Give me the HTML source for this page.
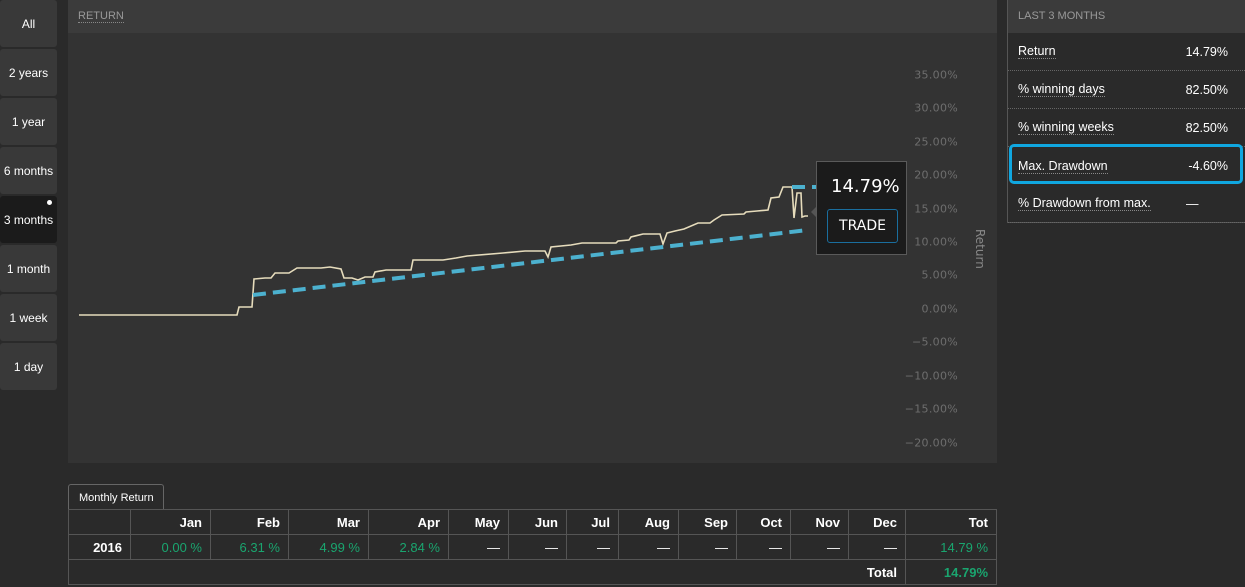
<!DOCTYPE html>
<html><head><meta charset="utf-8"><style>
*{margin:0;padding:0;box-sizing:border-box}
body{width:1245px;height:587px;background:#2a2a2a;font-family:"Liberation Sans",Arial,sans-serif;position:relative;overflow:hidden;color:#fff}
.btn{position:absolute;left:0;width:57px;height:47px;background:#393939;border-radius:3px;font-size:12px;display:flex;align-items:center;justify-content:center}
.btn.act{background:#1b1b1b}
.dot{position:absolute;right:5px;top:4px;width:5px;height:5px;border-radius:50%;background:#fff}
.panel{position:absolute;left:68px;top:0;width:929px;height:463px;background:#333}
.ph{height:33px;background:#3b3b3b;font-size:11px;color:#999;padding:10px 10px}
.ph span{border-bottom:1px dotted #888}
.yl{position:absolute;right:39px;font-size:11px;color:#6e6e6e;font-family:"DejaVu Sans",sans-serif;letter-spacing:.3px;transform:translateY(-50%)}
.rp{position:absolute;left:1007px;top:0;width:238px;height:223px;background:#2a2a2a;border-left:1px solid #555;border-bottom:1px solid #555}
.rph{height:33px;background:#3b3b3b;font-size:11px;color:#999;padding:10px 10px}
.row{height:38px;border-bottom:1px dotted #666;font-size:12.5px;display:flex;align-items:center;padding:0 17px 0 10px;justify-content:space-between}
.row .k{border-bottom:1px dotted #888}
.row .v{width:60px;text-align:right}
table{position:absolute;left:68px;top:509px;width:929px;border-collapse:collapse;font-size:13px}
td{border:1px solid #555;height:25px;text-align:right;padding:0 8px;font-weight:normal}
.h td{font-weight:bold}
.g{color:#1aa56f}
.tab{position:absolute;left:68px;top:484px;width:96px;height:26px;background:#2a2a2a;border:1px solid #666;border-bottom:none;border-radius:3px 3px 0 0;font-size:11px;padding:7px 10px;white-space:nowrap}
</style></head><body>
<div class="btn" style="top:0">All</div>
<div class="btn" style="top:49px">2 years</div>
<div class="btn" style="top:98px">1 year</div>
<div class="btn" style="top:147px">6 months</div>
<div class="btn act" style="top:196px">3 months<div class="dot"></div></div>
<div class="btn" style="top:245px">1 month</div>
<div class="btn" style="top:294px">1 week</div>
<div class="btn" style="top:343px">1 day</div>

<div class="panel">
<div class="ph"><span>RETURN</span></div>
<div class="yl" style="top:75px">35.00%</div>
<div class="yl" style="top:108px">30.00%</div>
<div class="yl" style="top:142px">25.00%</div>
<div class="yl" style="top:175px">20.00%</div>
<div class="yl" style="top:209px">15.00%</div>
<div class="yl" style="top:242px">10.00%</div>
<div class="yl" style="top:275px">5.00%</div>
<div class="yl" style="top:309px">0.00%</div>
<div class="yl" style="top:342px">−5.00%</div>
<div class="yl" style="top:376px">−10.00%</div>
<div class="yl" style="top:409px">−15.00%</div>
<div class="yl" style="top:443px">−20.00%</div>
<div style="position:absolute;left:919px;top:229px;transform:rotate(90deg);transform-origin:0 0;font-size:12px;color:#888;font-family:'DejaVu Sans',sans-serif">Return</div>
</div>

<svg style="position:absolute;left:0;top:0" width="1245" height="587">
<polyline fill="none" stroke="#e6dcbc" stroke-width="1.6" points="79,315 237,315 239,307 252,307 254,279 265,278 271,278 275,273 289,273 297,268 321,268 330,267 341,269 344,278 352,278 358,280 365,277 373,277 375,272 386,270 411,270 413,260 443,260 456,258 467,256 503,253 525,251 545,251 548,257 551,247 571,245 582,243 616,243 618,241 629,240 631,237 643,234 660,234 663,244 667,233 675,231 684,229 698,223 710,223 714,220 722,215 744,214 746,212 757,211 768,210 771,198 779,197 783,187 792,187 794,218 797,193 801,193 802,217 805,216 808,216"/>
<line x1="253" y1="295" x2="808" y2="230" stroke="#4cb1cf" stroke-width="4" stroke-dasharray="13,7"/>
<line x1="792" y1="187" x2="826" y2="187" stroke="#4cb1cf" stroke-width="4" stroke-dasharray="13,7"/>
<polygon points="816,207 811,212 816,217" fill="#555"/>
</svg>
<div style="position:absolute;left:816px;top:161px;width:91px;height:94px;background:#1b1b1b;border:1px solid #5a5a5a">
<div style="position:absolute;left:14px;top:14px;font-size:18px;font-family:'DejaVu Sans',sans-serif;color:#fff">14.79%</div>
<div style="position:absolute;left:10px;top:47px;width:71px;height:34px;border:1px solid #1a6e9e;border-radius:3px;font-size:14px;font-family:'DejaVu Sans',sans-serif;display:flex;align-items:center;justify-content:center">TRADE</div>
</div>

<div class="rp">
<div class="rph">LAST 3 MONTHS</div>
<div class="row"><span class="k">Return</span><span class="v">14.79%</span></div>
<div class="row"><span class="k">% winning days</span><span class="v">82.50%</span></div>
<div class="row"><span class="k">% winning weeks</span><span class="v">82.50%</span></div>
<div class="row" style="border-bottom:none"><span class="k">Max. Drawdown</span><span class="v">-4.60%</span></div>
<div class="row" style="border-bottom:1px dotted #666"><span class="k">% Drawdown from max.</span><span class="v" style="text-align:left;padding-left:18px">—</span></div>
</div>
<div style="position:absolute;left:1009px;top:144px;width:234px;height:40px;border:3px solid #10a7e0;border-radius:5px"></div>

<div class="tab">Monthly Return</div>
<table>
<tr class="h"><td style="width:62px"></td><td style="width:80px">Jan</td><td style="width:78px">Feb</td><td style="width:80px">Mar</td><td style="width:80px">Apr</td><td style="width:60px">May</td><td style="width:58px">Jun</td><td style="width:52px">Jul</td><td style="width:60px">Aug</td><td style="width:58px">Sep</td><td style="width:54px">Oct</td><td style="width:58px">Nov</td><td style="width:57px">Dec</td><td>Tot</td></tr>
<tr><td style="font-weight:bold">2016</td><td class="g">0.00 %</td><td class="g">6.31 %</td><td class="g">4.99 %</td><td class="g">2.84 %</td><td>—</td><td>—</td><td>—</td><td>—</td><td>—</td><td>—</td><td>—</td><td>—</td><td class="g">14.79 %</td></tr>
<tr><td colspan="13" style="font-weight:bold;border-top:1px dotted #777">Total</td><td class="g" style="font-weight:bold;border-top:1px dotted #777">14.79%</td></tr>
</table>
</body></html>
